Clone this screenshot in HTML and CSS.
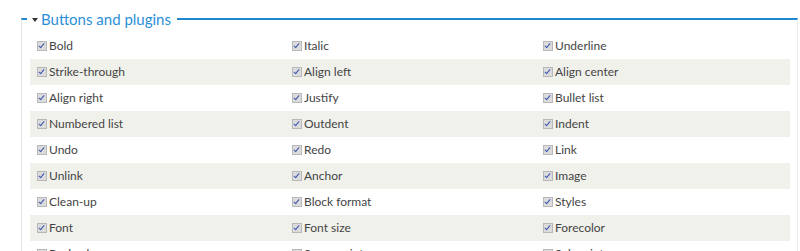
FILE: index.html
```html
<!DOCTYPE html>
<html>
<head>
<meta charset="utf-8">
<link rel="stylesheet" href="styles.css">
</head>
<body>
<fieldset class="panel">
  <legend class="panel-title"><span class="caret"></span>Buttons and plugins</legend>
  <div class="grid">
    <div class="row"><label class="item"><span class="cb"></span>Bold</label><label class="item"><span class="cb"></span>Italic</label><label class="item"><span class="cb"></span>Underline</label></div>
    <div class="row odd"><label class="item"><span class="cb"></span>Strike-through</label><label class="item"><span class="cb"></span>Align left</label><label class="item"><span class="cb"></span>Align center</label></div>
    <div class="row"><label class="item"><span class="cb"></span>Align right</label><label class="item"><span class="cb"></span>Justify</label><label class="item"><span class="cb"></span>Bullet list</label></div>
    <div class="row odd"><label class="item"><span class="cb"></span>Numbered list</label><label class="item"><span class="cb"></span>Outdent</label><label class="item"><span class="cb"></span>Indent</label></div>
    <div class="row"><label class="item"><span class="cb"></span>Undo</label><label class="item"><span class="cb"></span>Redo</label><label class="item"><span class="cb"></span>Link</label></div>
    <div class="row odd"><label class="item"><span class="cb"></span>Unlink</label><label class="item"><span class="cb"></span>Anchor</label><label class="item"><span class="cb"></span>Image</label></div>
    <div class="row"><label class="item"><span class="cb"></span>Clean-up</label><label class="item"><span class="cb"></span>Block format</label><label class="item"><span class="cb"></span>Styles</label></div>
    <div class="row odd"><label class="item"><span class="cb"></span>Font</label><label class="item"><span class="cb"></span>Font size</label><label class="item"><span class="cb"></span>Forecolor</label></div>
    <div class="row"><label class="item"><span class="cb"></span>Backcolor</label><label class="item"><span class="cb"></span>Superscript</label><label class="item"><span class="cb"></span>Subscript</label></div>
  </div>
</fieldset>
</body>
</html>
```
FILE: styles.css
```css
html, body {
  margin: 0;
  padding: 0;
  background: #fff;
  overflow: hidden;
}
body {
  font-family: Lato, "Open Sans", "Liberation Sans", sans-serif;
  font-size: 12px;
  color: #444;
}
.panel {
  margin: 10px 2px 0 21px;
  padding: 5px 7px 0 8px;
  border: 0;
  border-top: 2px solid #1f86d0;
  border-left: 1px solid #e4e4e4;
  border-right: 1px solid #ececec;
  min-width: 0;
}
.panel-title {
  margin-left: -3px;
  padding: 0 6px 0 5px;
  font-size: 15px;
  color: #2b8fd8;
  line-height: 18px;
  display: flex;
  align-items: center;
}
.caret {
  display: inline-block;
  width: 0;
  height: 0;
  border-left: 3px solid transparent;
  border-right: 3px solid transparent;
  border-top: 4px solid #333;
  margin-right: 3px;
  margin-top: 1px;
}
.grid {
  display: flex;
  flex-direction: column;
}
.row {
  display: grid;
  grid-template-columns: 255px 251px 1fr;
  height: 26px;
  align-items: center;
  padding-left: 7px;
}
.row.odd {
  background: #f1f1ec;
}
.item {
  display: flex;
  align-items: center;
  line-height: 16px;
}
.cb {
  position: relative;
  width: 8px;
  height: 8px;
  border: 1px solid #b8b8b8;
  background: #dcdcdc;
  margin-right: 2px;
  flex: none;
}
.cb::after {
  content: "";
  position: absolute;
  left: 2px;
  top: 0px;
  width: 2px;
  height: 5px;
  border-right: 1px solid #3a55b0;
  border-bottom: 1px solid #3a55b0;
  transform: rotate(40deg);
}
```
